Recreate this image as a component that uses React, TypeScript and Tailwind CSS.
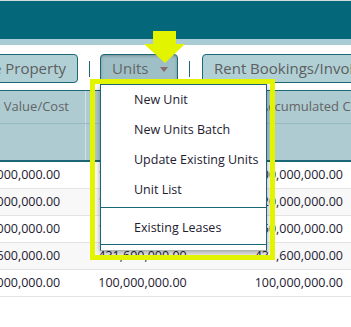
import React from "react";

const rows = [
  ["100,000,000.00", "100,000,000.00", "100,000,000.00"],
  ["120,000,000.00", "120,000,000.00", "120,000,000.00"],
  ["150,000,000.00", "150,000,000.00", "150,000,000.00"],
  ["431,600,000.00", "431,600,000.00", "431,600,000.00"],
  ["100,000,000.00", "100,000,000.00", "100,000,000.00"],
];

export default function App() {
  return (
    <div
      className="relative w-[351px] h-[327px] overflow-hidden bg-white whitespace-nowrap"
      style={{ fontFamily: '"Open Sans", "Noto Sans", sans-serif' }}
    >
      <div className="h-px bg-[#d5dcde]" />
      <div className="h-[38px] bg-[#04687a]" />
      <div className="h-[6px] bg-[#a9cbd3]" />

      {/* tabs */}
      <div className="flex items-center pt-[9px] pb-[7px]">
        <div className="-ml-[72px] w-[150px] h-[29px] shrink-0 rounded-[4px] border border-[#1b6777] bg-[#b0d0d6] flex items-center justify-end pr-[11px] text-[15px] text-[#5e5e5e]">
          Manage Property
        </div>
        <div className="ml-[11px] w-px h-[16px] shrink-0 bg-[#1b6777]" />
        <div className="ml-[10px] w-[78px] h-[29px] shrink-0 rounded-[4px] border border-[#1b6777] bg-[#9ebfc6] shadow-[inset_0_1px_3px_rgba(0,0,0,0.25)] flex items-center pl-[11px] text-[15px] text-[#666]">
          Units
          <svg width="8" height="5" viewBox="0 0 8 5" className="ml-[12px] mt-[1px]">
            <polygon points="0,0 8,0 4,5" fill="#8a6a6a" />
          </svg>
        </div>
        <div className="ml-[11px] w-px h-[16px] shrink-0 bg-[#1b6777]" />
        <div className="ml-[12px] w-[220px] h-[29px] shrink-0 rounded-[4px] border border-[#1b6777] bg-[#b0d0d6] flex items-center pl-[11px] text-[15px] text-[#5e5e5e]">
          Rent Bookings/Invoices
        </div>
      </div>

      {/* table */}
      <div className="-ml-[54px] w-[405px] text-[12.5px]">
        <div className="flex h-[34px] border-t border-b border-t-[#1b6777] border-b-[#97bbc3] bg-[#aecbd2] text-[13px] text-[#646464]">
          <div className="w-[140px] shrink-0 border-r border-[#cfe2e6] flex items-center justify-end pr-[16px]">
            Original Value/Cost
          </div>
          <div className="w-[113px] shrink-0 border-r border-[#cfe2e6] flex items-center justify-center">
            Selling Price
          </div>
          <div className="flex-1 flex items-center pl-[61px]">Accumulated Cost</div>
        </div>
        <div className="flex h-[36px] bg-[#aecbd2]">
          <div className="w-[140px] shrink-0 border-r border-[#cfe2e6]" />
          <div className="w-[113px] shrink-0 border-r border-[#cfe2e6]" />
          <div className="flex-1" />
        </div>
        <div className="h-[2px] bg-[#1b6777]" />
        {rows.map((r, i) => (
          <div
            key={i}
            className={`flex h-[27px] border-b border-[#e4e4e4] text-[#1e2030] ${
              i % 2 === 1 ? "bg-[#f8f8f8]" : "bg-white"
            }`}
          >
            <div className="w-[140px] shrink-0 flex items-center justify-center">{r[0]}</div>
            <div className="w-[113px] shrink-0 flex items-center justify-center">{r[1]}</div>
            <div className="flex-1 flex items-center justify-end pr-[8px]">{r[2]}</div>
          </div>
        ))}
      </div>

      {/* dropdown menu */}
      <div className="absolute left-[100px] top-[84px] w-[167px] h-[167px] bg-white border border-[#1b6777] border-b-[#a9b4b7] shadow-[0_2px_6px_rgba(0,0,0,0.35)] text-[12.5px] text-[#1e2030]">
        <div className="h-[30px] flex items-center pl-[33px]">New Unit</div>
        <div className="h-[30px] flex items-center pl-[33px]">New Units Batch</div>
        <div className="h-[30px] flex items-center pl-[33px]">Update Existing Units</div>
        <div className="h-[30px] flex items-center pl-[33px]">Unit List</div>
        <div className="mt-[2px] h-px bg-[#1b6777]" />
        <div className="h-[36px] pt-[5px] flex items-center pl-[33px]">Existing Leases</div>
        <div className="h-px bg-[#1b6777]" />
      </div>

      {/* yellow highlight */}
      <div className="absolute left-[90px] top-[79px] w-[185px] h-[181px] border-[5px] border-[#e3f400]" />

      {/* yellow arrow */}
      <svg
        className="absolute left-[140px] top-[28px]"
        width="50"
        height="38"
        viewBox="0 0 50 38"
      >
        <polygon
          points="13,3 36,3 36,16 45,16 25,35 4,16 13,16"
          fill="#e3f400"
        />
      </svg>
    </div>
  );
}
